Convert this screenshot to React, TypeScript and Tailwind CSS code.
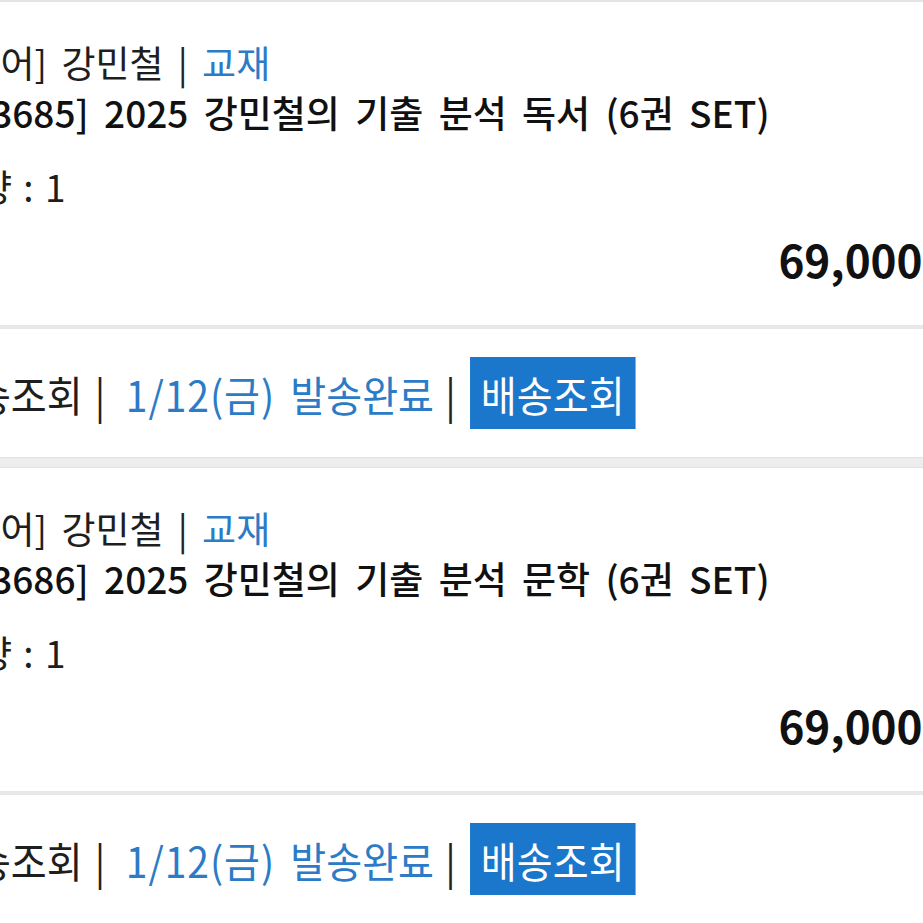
import React from "react";

type Item = { code: string; title: string };

const items: Item[] = [
  { code: "3685", title: "2025 강민철의 기출 분석 독서 (6권 SET)" },
  { code: "3686", title: "2025 강민철의 기출 분석 문학 (6권 SET)" },
];

function Card({ item }: { item: Item }) {
  return (
    <div className="bg-white">
      <div className="pt-[35px] pb-[41px]">
        <div className="h-[50px] leading-[50px] whitespace-nowrap -ml-[46px] text-[37px] text-[#1e1e1e] [word-spacing:6px]">
          [국어] 강민철 <span className="text-[#222]">|</span>{" "}
          <span className="text-[#2c7bc6]">교재</span>
        </div>
        <div className="h-[50px] leading-[50px] whitespace-nowrap -ml-[22px] text-[37px] font-medium text-[#111] [word-spacing:7px]">
          [{item.code}] {item.title}
        </div>
        <div className="mt-[24px] h-[50px] leading-[50px] whitespace-nowrap -ml-[56px] text-[37px] text-[#1e1e1e] [word-spacing:3px]">
          수량 : 1
        </div>
        <div className="mt-[23px] h-[50px] flex justify-end items-center">
          <span className="-mr-[40px] text-[44px] font-bold leading-[50px] text-[#111] whitespace-nowrap">
            69,000원
          </span>
        </div>
      </div>
      <div className="h-[4px] bg-[#e8e8e8]" />
      <div className="h-[128px] flex items-center">
        <div className="-ml-[61px] flex items-center shrink-0 origin-left scale-x-[0.93] text-[42px] whitespace-nowrap">
          <span className="text-[#1e1e1e]">배송조회</span>
          <span className="ml-[13px] text-[#222]">|</span>
          <span className="ml-[22px] text-[#2c7bc6] [word-spacing:7px]">
            <span className="tracking-[1px]">1/12(금)</span> 발송완료
          </span>
          <span className="ml-[12px] text-[#222]">|</span>
          <span className="ml-[15px] h-[72px] px-[12px] flex items-center bg-[#1b77cc] text-white">
            배송조회
          </span>
        </div>
      </div>
    </div>
  );
}

export default function App() {
  return (
    <div
      className="w-full min-h-screen overflow-hidden bg-white"
      style={{ fontFamily: '"Noto Sans CJK KR", "Noto Sans", sans-serif' }}
    >
      <div className="h-[2px] bg-[#e4e4e4]" />
      <Card item={items[0]} />
      <div className="h-[11px] bg-[#ededed] border-y border-[#e2e2e2]" />
      <Card item={items[1]} />
    </div>
  );
}
